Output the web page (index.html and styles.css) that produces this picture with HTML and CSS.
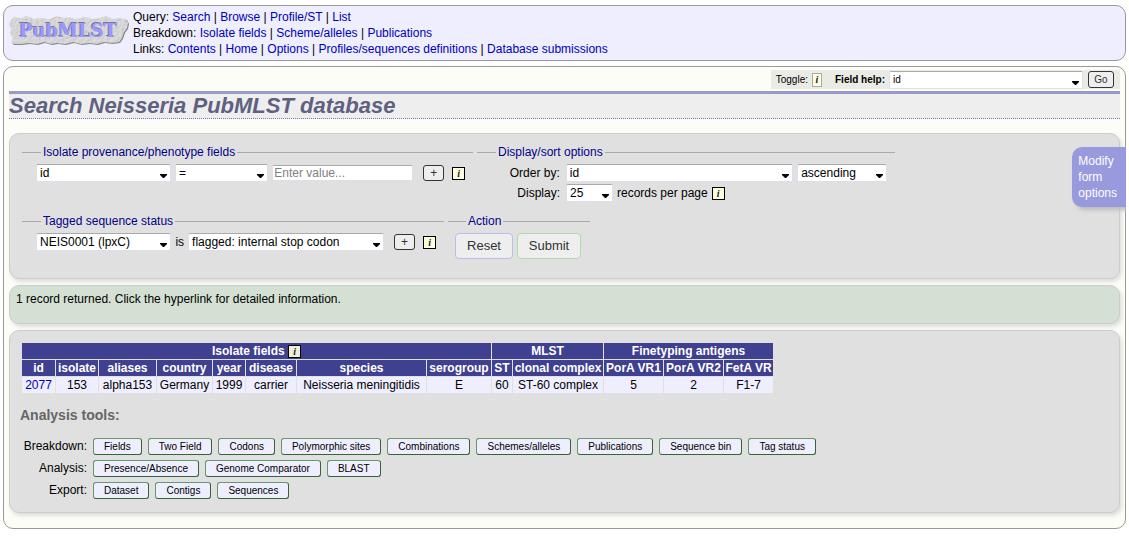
FILE: index.html
```html
<!DOCTYPE html>
<html lang="en">
<head>
<meta charset="utf-8">
<title>Search Neisseria PubMLST database</title>
<link rel="stylesheet" href="styles.css">
</head>
<body>
<header class="banner">
  <svg class="logo" viewBox="0 0 120 32" role="img" aria-label="PubMLST">
    <defs>
      <filter id="stone" x="-5%" y="-10%" width="110%" height="120%">
        <feTurbulence type="fractalNoise" baseFrequency="0.35" numOctaves="3" seed="4" result="n"/>
        <feDiffuseLighting in="n" surfaceScale="0.7" lighting-color="#e2e2e2" result="l"><feDistantLight azimuth="225" elevation="62"/></feDiffuseLighting>
        <feComposite in="l" in2="SourceGraphic" operator="in"/>
      </filter>
      <path id="slab" d="M2 5L5 2L12 3L17 1L21 2L24 4L32 3L40 4L48 1L56 3L60 2L66 4L72 3L76 2L84 4L90 3L97 1L103 4L110 3L117 4L119 8L118 13L115 17L113 23L110 27L103 28L95 27L88 29L80 28L72 29L64 27L56 29L48 28L42 29L35 27L28 29L20 28L12 29L4 29L2 27L4 23L1 18L2 13L0 9Z"/>
    </defs>
    <use class="logo-shade" href="#slab" x="1" y="1"/>
    <use href="#slab" filter="url(#stone)"/>
    <text class="logo-under" x="58" y="21" text-anchor="middle">PubMLST</text>
    <text class="logo-text" x="59" y="22" text-anchor="middle">PubMLST</text>
  </svg>
  <nav class="menu">
    <div>Query: <a href="#">Search</a> | <a href="#">Browse</a> | <a href="#">Profile/ST</a> | <a href="#">List</a></div>
    <div>Breakdown: <a href="#">Isolate fields</a> | <a href="#">Scheme/alleles</a> | <a href="#">Publications</a></div>
    <div>Links: <a href="#">Contents</a> | <a href="#">Home</a> | <a href="#">Options</a> | <a href="#">Profiles/sequences definitions</a> | <a href="#">Database submissions</a></div>
  </nav>
</header>

<main class="content">
  <div class="toolbar">
    <span>Toggle:</span><a class="info faded" href="#">i</a>
    <label for="help">Field help:</label>
    <select id="help" class="help-field"><option>id</option></select>
    <button class="small-button go">Go</button>
  </div>
  <h1>Search Neisseria PubMLST database</h1>

  <form class="panel query">
    <div class="form-row">
      <fieldset class="provenance">
        <legend>Isolate provenance/phenotype fields</legend>
        <div class="controls">
          <select class="field" aria-label="Field"><option>id</option></select>
          <select class="operator" aria-label="Operator"><option>=</option></select>
          <input class="value" type="text" placeholder="Enter value..." aria-label="Value">
          <button type="button" class="small-button add">+</button>
          <a class="info" href="#">i</a>
        </div>
      </fieldset>
      <fieldset class="display">
        <legend>Display/sort options</legend>
        <div class="controls">
          <label for="order">Order by:</label>
          <select id="order" class="order"><option>id</option></select>
          <select class="direction" aria-label="Direction"><option>ascending</option></select>
        </div>
        <div class="controls">
          <label for="count">Display:</label>
          <select id="count" class="count"><option>25</option></select>
          <span>records per page</span>
          <a class="info near" href="#">i</a>
        </div>
      </fieldset>
    </div>
    <div class="form-row">
      <fieldset class="tagged">
        <legend>Tagged sequence status</legend>
        <div class="controls">
          <select class="field" aria-label="Locus"><option>NEIS0001 (lpxC)</option></select>
          <span>is</span>
          <select class="status" aria-label="Status"><option>flagged: internal stop codon</option></select>
          <button type="button" class="small-button add">+</button>
          <a class="info" href="#">i</a>
        </div>
      </fieldset>
      <fieldset class="action">
        <legend>Action</legend>
        <div class="actions">
          <button type="reset" class="big-button reset">Reset</button>
          <button type="button" class="big-button submit">Submit</button>
        </div>
      </fieldset>
    </div>
  </form>

  <section class="panel message">1 record returned. Click the hyperlink for detailed information.</section>

  <section class="panel results">
    <table>
      <colgroup>
        <col class="c-id"><col class="c-isolate"><col class="c-aliases"><col class="c-country"><col class="c-year"><col class="c-disease"><col class="c-species"><col class="c-serogroup"><col class="c-st"><col class="c-complex"><col class="c-antigen"><col class="c-antigen"><col class="c-feta">
      </colgroup>
      <thead>
        <tr><th colspan="8">Isolate fields <a class="info" href="#">i</a></th><th colspan="2">MLST</th><th colspan="3">Finetyping antigens</th></tr>
        <tr><th>id</th><th>isolate</th><th>aliases</th><th>country</th><th>year</th><th>disease</th><th>species</th><th>serogroup</th><th>ST</th><th>clonal complex</th><th>PorA VR1</th><th>PorA VR2</th><th>FetA VR</th></tr>
      </thead>
      <tbody>
        <tr><td><a href="#">2077</a></td><td>153</td><td>alpha153</td><td>Germany</td><td>1999</td><td>carrier</td><td>Neisseria meningitidis</td><td>E</td><td>60</td><td>ST-60 complex</td><td>5</td><td>2</td><td>F1-7</td></tr>
      </tbody>
    </table>
    <h2>Analysis tools:</h2>
    <div class="tools">
      <span class="tool-label">Breakdown:</span>
      <div class="tool-list"><button>Fields</button><button>Two Field</button><button>Codons</button><button>Polymorphic sites</button><button>Combinations</button><button>Schemes/alleles</button><button>Publications</button><button>Sequence bin</button><button>Tag status</button></div>
      <span class="tool-label">Analysis:</span>
      <div class="tool-list"><button>Presence/Absence</button><button>Genome Comparator</button><button>BLAST</button></div>
      <span class="tool-label">Export:</span>
      <div class="tool-list"><button>Dataset</button><button>Contigs</button><button>Sequences</button></div>
    </div>
  </section>

  <a class="modify" href="#">Modify<br>form<br>options</a>
</main>
</body>
</html>
```
FILE: styles.css
```css
* { box-sizing: border-box; }

body {
  margin: 5px 3px;
  background: #fff;
  color: #000;
  font: 12px/16px "Liberation Sans", Arial, sans-serif;
}

a { color: #00b; text-decoration: none; }
button, input, select { font: inherit; margin: 0; }

.banner {
  display: flex;
  gap: 4px;
  padding: 3px 5px;
  border: 1px solid #999;
  border-radius: 10px;
  background: #eef;
}
.logo { width: 120px; height: 32px; margin-top: 6px; overflow: visible; }
.logo-shade { fill: #888; }
.logo-text, .logo-under { font: bold 18px "DejaVu Serif", serif; }
.logo-text { fill: #99f; }
.logo-under { fill: #779; }

.content {
  position: relative;
  margin-top: 5px;
  padding: 3px 5px 15px;
  border: 1px solid #999;
  border-radius: 10px;
  background: #fdfdf8;
}

.toolbar {
  display: flex;
  align-items: center;
  width: fit-content;
  height: 19px;
  margin-left: auto;
  padding: 0 6px 0 5px;
  background: #ebebe6;
  font-size: 10px;
}
.toolbar label { margin: 0 4px 0 13px; font-weight: bold; }

h1 {
  margin: 2px 0 14px;
  border-top: 3px solid #99c;
  border-bottom: 1px dotted #77b;
  background: #eee;
  color: #606080;
  font-size: 22px;
  line-height: 24px;
  font-style: italic;
}

select {
  appearance: none;
  height: 18px;
  padding: 0 14px 0 3px;
  border: 1px solid #dde;
  border-top-color: #aaa;
  border-radius: 2px;
  background: #fff url("data:image/svg+xml,%3Csvg xmlns='http://www.w3.org/2000/svg' width='7' height='4'%3E%3Cpath d='M0 0h7v1L4 4H3L0 1z'/%3E%3C/svg%3E") no-repeat right 3px top 9px;
  color: #000;
  line-height: 16px;
}

.info {
  display: inline-block;
  width: 13px;
  height: 13px;
  border: 1px solid #000;
  background: #ffd;
  color: #222;
  font: italic bold 10px/11px "Liberation Serif", serif;
  text-align: center;
}
.info.faded { width: 10px; height: 14px; margin-left: 4px; border-color: #aaa; line-height: 12px; }

.small-button {
  padding: 0;
  border: 1px solid #333;
  border-radius: 3px;
  background: #eee;
  color: #333;
  line-height: 12px;
}
.go { width: 26px; height: 17px; margin-left: 5px; font-size: 10px; }
.add { width: 21px; height: 16px; }
.help-field { width: 194px; }

.panel {
  border: 1px solid #ccc;
  border-radius: 10px;
  background: #e0e0e0;
  box-shadow: 2px 3px 4px #ddd;
}
.query { padding: 10px 12px 19px; }
.form-row { display: flex; gap: 4px; }
.form-row + .form-row { margin-top: 9px; }

fieldset {
  min-width: 0;
  margin: 0;
  padding: 3px 8px 0 14px;
  border: 0;
  border-top: 1px solid #aaa;
}
legend { margin-left: 5px; padding: 0 2px; color: #008; }
.provenance { width: 451px; min-height: 60px; }
.display { width: 418px; padding-left: 0; }
.display legend { margin-left: 19px; }
.tagged { width: 422px; }
.action { width: 142px; padding-left: 7px; }
.action legend { margin-left: 11px; }

.controls { display: flex; align-items: center; gap: 4px; height: 20px; }
.controls label { width: 85px; padding-right: 2px; text-align: right; }
.controls .add { margin-left: 6px; }
.controls .info { margin-left: 4px; }
.controls .near { margin-left: 0; }
.field { width: 136px; }
.operator { width: 94px; }
.value {
  width: 141px;
  height: 16px;
  padding: 0 1px;
  border: 1px solid #dde;
  border-top-color: #aaa;
  border-radius: 2px;
  background: #fff;
}
.value::placeholder { color: #808080; }
.order { width: 228px; }
.direction { width: 90px; }
.count { width: 47px; }
.status { width: 197px; }

.actions { display: flex; gap: 4px; padding-top: 1px; }
.big-button {
  height: 26px;
  padding: 0;
  border: 1px solid #bbe;
  border-radius: 4px;
  background: #eee;
  color: #333;
  font-size: 13px;
}
.reset { width: 58px; }
.submit { width: 64px; border-color: #ada; }

.message { margin-top: 6px; padding: 5px 6px 16px; background: #d5e0d5; }

.results { margin-top: 6px; padding: 11px 11px 13px 10px; }
table { margin-left: 1px; border-spacing: 1px; text-align: center; }
th, td { height: 16px; padding: 0 1px; line-height: 16px; white-space: nowrap; }
th { background: #404090; color: #fff; }
td { background: #eef; }
th .info { background: #eed; vertical-align: middle; }
.c-id { width: 33px; }
.c-isolate { width: 42px; }
.c-aliases { width: 57px; }
.c-country { width: 55px; }
.c-year { width: 32px; }
.c-disease { width: 50px; }
.c-species { width: 129px; }
.c-serogroup { width: 64px; }
.c-st { width: 20px; }
.c-complex { width: 90px; }
.c-antigen { width: 59px; }
.c-feta { width: 49px; }

h2 { margin: 13px 0 15px; color: #666; font-size: 14px; line-height: 16px; }

.tools {
  display: grid;
  grid-template-columns: 67px 1fr;
  gap: 5px 6px;
}
.tool-label { height: 17px; text-align: right; line-height: 16px; }
.tool-list { display: flex; flex-wrap: wrap; gap: 6px; }
.tool-list button {
  height: 17px;
  padding: 0 10px;
  border: 1px solid;
  border-color: #696 #363 #363 #696;
  border-radius: 3px;
  background: #eef;
  color: #000;
  font-size: 10px;
  line-height: 14px;
}

.modify {
  position: absolute;
  top: 80px;
  right: -1px;
  padding: 6px 9px 6px 6px;
  border-radius: 10px 0 0 10px;
  background: #99d;
  box-shadow: 3px 3px 4px #bbb;
  color: #fff;
}
```
